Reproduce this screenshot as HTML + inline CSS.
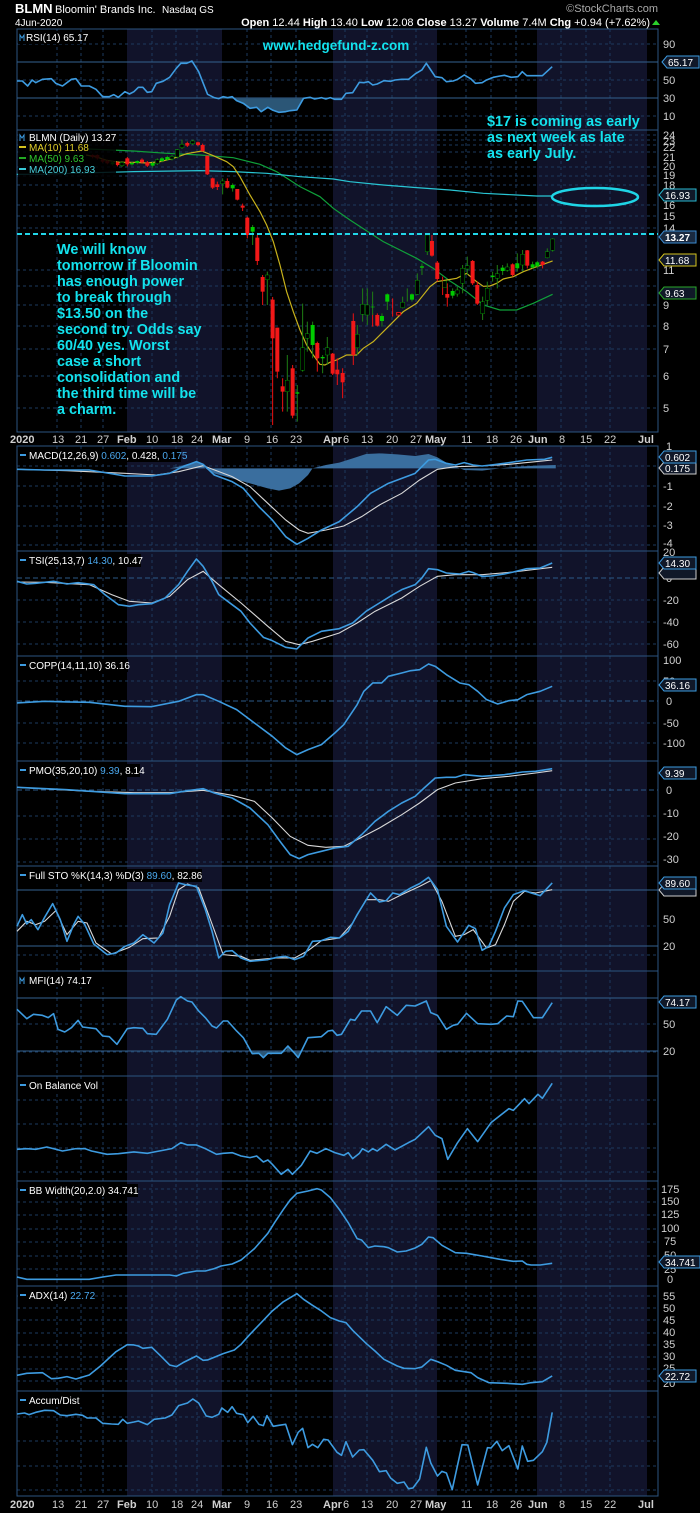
<!DOCTYPE html>
<html><head><meta charset="utf-8"><style>
html,body{margin:0;padding:0;background:#000;}
svg{display:block;font-family:"Liberation Sans",sans-serif;}
.l{fill:none;stroke:#3d9be0;stroke-width:1.6;vector-effect:non-scaling-stroke;stroke-linejoin:round}
.w{fill:none;stroke:#d8d8d8;stroke-width:1.1;vector-effect:non-scaling-stroke}
.ax{fill:#d0d0d0;font-size:11px}
.lb{fill:#fff;font-size:10px}
.gr{stroke:#1d3a5e;stroke-width:1;stroke-dasharray:3,3}
.bd{stroke:#2c5580;stroke-width:1}
.wk{stroke:#1f7e14;stroke-width:1;vector-effect:non-scaling-stroke}
.ho{fill:#000;stroke:#0c0;stroke-width:1;vector-effect:non-scaling-stroke}
</style></head><body>
<svg width="700" height="1513" viewBox="0 0 700 1513" xmlns="http://www.w3.org/2000/svg">
<rect width="700" height="1513" fill="#000"/>
<g fill="#11132a">
<rect x="127" y="29" width="95" height="403"/><rect x="333" y="29" width="104" height="403"/><rect x="537" y="29" width="110" height="403"/>
<rect x="127" y="446" width="95" height="1050"/><rect x="333" y="446" width="104" height="1050"/><rect x="537" y="446" width="110" height="1050"/>
</g>
<g class="gr">
<path d="M57 29V432M81 29V432M103 29V432M152 29V432M176 29V432M197 29V432M247 29V432M271 29V432M296 29V432M345 29V432M367 29V432M392 29V432M416 29V432M466 29V432M491 29V432M516 29V432M561 29V432M586 29V432M610 29V432"/>
<path d="M57 446V1496M81 446V1496M103 446V1496M152 446V1496M176 446V1496M197 446V1496M247 446V1496M271 446V1496M296 446V1496M345 446V1496M367 446V1496M392 446V1496M416 446V1496M466 446V1496M491 446V1496M516 446V1496M561 446V1496M586 446V1496M610 446V1496"/>
<path d="M17 44H658M17 80H658M17 116H658"/>
<path d="M17 135H658M17 140H658M17 145H658M17 152H658M17 167H658M17 176H658M17 185H658M17 205H658M17 216H658M17 228H658M17 270H658M17 286H658M17 305H658M17 326H658M17 349H658M17 376H658M17 408H658"/>
<path d="M17 466H658M17 486H658M17 506H658M17 526H658M17 545H658"/>
<path d="M17 600H658M17 622H658M17 644H658"/>
<path d="M17 681H658M17 723H658M17 743H658"/>
<path d="M17 816H658M17 839H658M17 862H658"/>
<path d="M17 926H658M17 955H658"/>
<path d="M17 1024H658M17 1052H658"/>
<path d="M17 1100H658M17 1124H658M17 1148H658M17 1172H658"/>
<path d="M17 1189H658M17 1202H658M17 1215H658M17 1229H658M17 1242H658M17 1256H658M17 1269H658"/>
<path d="M17 1296H658M17 1308H658M17 1320H658M17 1333H658M17 1345H658M17 1357H658M17 1369H658M17 1381H658"/>
<path d="M17 1417H658M17 1441H658M17 1466H658M17 1490H658"/>
</g>
<g class="bd" fill="none">
<rect x="17" y="29" width="641" height="403"/>
<rect x="17" y="446" width="641" height="1050"/>
<path d="M17 130H658M17 551H658M17 656H658M17 761H658M17 866H658M17 971H658M17 1076H658M17 1181H658M17 1286H658M17 1391H658"/>
<path d="M17 62H658M17 98H658" stroke="#33628f"/>
<path d="M17 890H658M17 946H658M17 998H658M17 1051H658" stroke="#33628f"/>
<path d="M17 578H658M17 701H658M17 790H658" stroke="#2c5a88" stroke-dasharray="5,3"/>
</g>

<text x="15" y="13" font-size="13" font-weight="bold" fill="#fff">BLMN</text>
<text x="55" y="13" font-size="11" fill="#fff">Bloomin' Brands Inc.</text>
<text x="162" y="13" font-size="10" fill="#fff">Nasdaq GS</text>
<text x="15" y="26" font-size="10" fill="#fff">4Jun-2020</text>
<text x="650" y="26" font-size="11" fill="#fff" text-anchor="end"><tspan font-weight="bold">Open</tspan> 12.44 <tspan font-weight="bold">High</tspan> 13.40 <tspan font-weight="bold">Low</tspan> 12.08 <tspan font-weight="bold">Close</tspan> 13.27 <tspan font-weight="bold">Volume</tspan> 7.4M <tspan font-weight="bold">Chg</tspan> +0.94 (+7.62%)</text>
<path d="M652 25l4-5 4 5z" fill="#2bd12b"/>
<text x="658" y="12" font-size="11" fill="#aaa" text-anchor="end">©StockCharts.com</text>

<g transform="scale(0.4464,0.3333)">
<polygon fill="#2b5676" points="495,296 500,290 510,293 520,290 530,302 545,310 560,325 575,322 585,335 600,322 610,330 625,337 640,335 650,332 665,330 680,296"/>
<polyline class="l" points="38,243 50,243 62,258 72,240 80,248 95,238 115,236 125,250 140,258 160,238 170,236 182,258 200,258 215,268 230,290 245,290 255,284 265,292 280,275 290,282 300,275 310,262 320,262 330,277 340,275 350,250 365,244 380,232 395,205 405,190 418,190 430,183 445,215 465,283 480,293 490,296 500,290 510,293 520,290 530,302 545,310 560,325 575,322 585,335 600,322 610,330 625,337 640,335 650,332 665,330 680,295 695,292 705,297 720,293 730,297 740,293 750,298 765,298 775,280 790,278 805,247 815,248 825,245 835,255 845,252 860,242 875,244 885,240 900,238 915,238 930,222 945,210 955,190 965,210 975,230 990,233 1000,245 1015,243 1025,238 1040,225 1055,237 1065,250 1080,248 1090,240 1105,232 1120,228 1130,226 1145,232 1160,230 1170,215 1180,227 1200,227 1215,227 1237,200"/>
</g>
<rect x="18" y="31" width="62" height="13" fill="#000"/>
<path d="M20 41v-6l2 3 2-3v6" stroke="#3d9be0" fill="none"/>
<text x="26" y="41" class="lb">RSI(14) 65.17</text>
<text x="336" y="50" font-size="13.5" font-weight="bold" fill="#13e3ee" text-anchor="middle">www.hedgefund-z.com</text>
<g class="ax"><text x="663" y="48">90</text><text x="663" y="84">50</text><text x="663" y="102">30</text><text x="663" y="120">10</text></g>
<path d="M662 62l5-6h32v12h-32z" fill="#101828" stroke="#3d9be0"/><text x="668" y="66" class="lb" font-size="11">65.17</text>

<g transform="translate(0,125) scale(0.3333)">
<polyline class="w" style="stroke:#0fa03a;stroke-width:1.2" points="265,72 400,78 500,85 600,90 700,98 780,118 830,140 900,185 960,215 1000,250 1050,285 1150,350 1250,400 1300,430 1350,468 1400,500 1450,540 1500,555 1550,555 1600,535 1658,508"/>
<polyline class="w" style="stroke:#29c6d4;stroke-width:1.2" points="50,148 120,148 285,143 400,140 600,137 700,140 800,145 900,155 1000,162 1050,170 1150,180 1250,188 1350,195 1450,205 1550,210 1610,213 1658,213"/>
<polyline class="w" style="stroke:#c8b21c;stroke-width:1.2" points="258,90 290,96 320,106 360,112 400,112 440,114 480,110 520,100 560,86 605,78 640,92 680,110 700,125 720,155 750,210 780,260 800,300 820,350 840,420 860,500 880,560 900,615 920,660 940,690 960,718 975,720 990,712 1010,705 1040,690 1050,690 1070,690 1090,670 1120,650 1150,620 1180,590 1210,560 1250,535 1290,485 1310,470 1340,465 1370,460 1400,445 1430,470 1450,484 1470,483 1490,475 1510,462 1540,455 1570,440 1610,425 1658,408"/>
<path class="wk" style="stroke:#e11" d="M278 88V100M292 88V104M308 100V114M322 104V118M352 110V124M382 96V124M426 100V116M442 108V126M562 50V66M594 50V64M608 56V80M622 92V150M638 158V192M652 170V195M682 160V190M712 192V226M728 236V258M742 275V340M772 330V420M788 450V540M818 516V900M832 608V760M848 760V860M878 720V880M952 650V740M998 684V750M1012 700V780M1028 730V820"/>
<path class="wk" d="M338 108V122M366 108V126M396 110V122M412 106V118M458 110V128M472 100V120M486 96V112M502 92V108M516 90V106M532 72V100M546 44V72M578 44V60M668 160V208M698 175V200M758 300V360M802 440V540M862 690V860M892 780V890M908 536V740M922 590V680M938 590V700M968 690V745M982 636V720"/>
<g fill="#f21818">
<rect x="272" y="90" width="12" height="6"/><rect x="286" y="90" width="12" height="10"/><rect x="302" y="104" width="12" height="6"/><rect x="316" y="108" width="12" height="7"/><rect x="346" y="112" width="12" height="8"/><rect x="376" y="100" width="12" height="18"/><rect x="420" y="104" width="12" height="8"/><rect x="436" y="112" width="12" height="10"/><rect x="556" y="54" width="12" height="8"/><rect x="588" y="52" width="12" height="8"/><rect x="602" y="60" width="12" height="18"/><rect x="616" y="92" width="12" height="56"/><rect x="632" y="160" width="12" height="28"/><rect x="646" y="178" width="12" height="8"/><rect x="676" y="168" width="12" height="20"/><rect x="706" y="192" width="12" height="32"/><rect x="722" y="242" width="12" height="6"/><rect x="736" y="278" width="12" height="52"/><rect x="766" y="338" width="12" height="70"/><rect x="782" y="456" width="12" height="44"/><rect x="812" y="524" width="12" height="116"/><rect x="826" y="608" width="12" height="132"/><rect x="842" y="784" width="12" height="16"/><rect x="872" y="730" width="12" height="142"/><rect x="946" y="654" width="12" height="46"/><rect x="992" y="686" width="12" height="60"/><rect x="1006" y="734" width="12" height="14"/><rect x="1022" y="744" width="12" height="28"/>
</g>
<g fill="#0c0">
<rect x="332" y="112" width="12" height="6"/><rect x="390" y="114" width="12" height="4"/><rect x="406" y="108" width="12" height="6"/><rect x="452" y="114" width="12" height="8"/><rect x="480" y="100" width="12" height="8"/><rect x="496" y="96" width="12" height="8"/><rect x="692" y="180" width="12" height="10"/><rect x="752" y="306" width="12" height="14"/><rect x="886" y="802" width="12" height="4"/><rect x="932" y="600" width="12" height="60"/><rect x="962" y="696" width="12" height="4"/>
</g>
<g class="ho">
<rect x="360" y="112" width="12" height="10"/><rect x="466" y="104" width="12" height="12"/><rect x="510" y="94" width="12" height="8"/><rect x="526" y="74" width="12" height="22"/><rect x="540" y="58" width="12" height="10"/><rect x="572" y="48" width="12" height="8"/><rect x="662" y="168" width="12" height="8"/><rect x="796" y="450" width="12" height="14"/><rect x="856" y="766" width="12" height="34"/><rect x="902" y="668" width="12" height="68"/><rect x="916" y="626" width="12" height="14"/><rect x="976" y="668" width="12" height="22"/>
</g>
<g transform="translate(-300,0)">
<path class="wk" style="stroke:#e11" d="M1360 565V720M1418 565V605M1432 565V605M1478 520V575M1596 330V395M1612 408V470M1628 455V510M1642 475V545M1718 405V480M1732 470V540M1838 415V455M1882 375V430M1928 408V430"/>
<path class="wk" d="M1372 600V690M1388 490V590M1402 490V600M1418 500V570M1446 565V605M1462 505V555M1508 515V550M1522 490V530M1536 505V530M1552 445V510M1566 415V450M1582 330V390M1658 490V520M1672 485V515M1688 420V505M1702 395V450M1748 515V585M1762 470V540M1778 440V470M1792 420V490M1808 420V450M1822 415V440M1852 385V440M1868 375V440M1898 410V430M1912 408V430M1942 370V400M1958 340V380"/>
<g fill="#f21818">
<rect x="1354" y="588" width="12" height="102"/><rect x="1426" y="570" width="12" height="32"/><rect x="1590" y="348" width="12" height="44"/><rect x="1606" y="413" width="12" height="49"/><rect x="1636" y="507" width="12" height="11"/><rect x="1712" y="408" width="12" height="67"/><rect x="1726" y="480" width="12" height="56"/><rect x="1832" y="418" width="12" height="32"/><rect x="1876" y="376" width="12" height="46"/><rect x="1922" y="410" width="12" height="10"/>
</g>
<g fill="#0c0">
<rect x="1412" y="545" width="12" height="2"/><rect x="1440" y="573" width="12" height="15"/><rect x="1456" y="508" width="12" height="22"/><rect x="1530" y="508" width="12" height="16"/><rect x="1560" y="424" width="12" height="4"/><rect x="1652" y="498" width="12" height="14"/><rect x="1772" y="452" width="12" height="4"/><rect x="1802" y="428" width="12" height="10"/><rect x="1846" y="415" width="12" height="15"/><rect x="1892" y="418" width="12" height="10"/><rect x="1906" y="412" width="12" height="12"/>
</g>
<g class="ho">
<rect x="1366" y="628" width="12" height="40"/><rect x="1382" y="538" width="12" height="30"/><rect x="1396" y="540" width="12" height="30"/><rect x="1502" y="532" width="12" height="16"/><rect x="1546" y="466" width="12" height="42"/><rect x="1576" y="330" width="12" height="50"/><rect x="1628" y="468" width="12" height="20"/><rect x="1666" y="495" width="12" height="12"/><rect x="1682" y="430" width="12" height="45"/><rect x="1696" y="422" width="12" height="10"/><rect x="1742" y="530" width="12" height="36"/><rect x="1756" y="490" width="12" height="36"/><rect x="1786" y="446" width="12" height="14"/><rect x="1816" y="426" width="12" height="10"/><rect x="1862" y="388" width="12" height="32"/><rect x="1936" y="380" width="12" height="18"/><rect x="1952" y="342" width="12" height="34"/>
</g>
<rect x="1490" y="563" width="12" height="7" fill="#000" stroke="#e11" vector-effect="non-scaling-stroke"/>
</g>
</g>
<ellipse cx="595" cy="197" rx="43" ry="9" fill="none" stroke="#1fd5e6" stroke-width="2.5"/>
<path d="M17 234H658" stroke="#22d6e8" stroke-width="2" stroke-dasharray="5,3"/>
<rect x="18" y="132" width="98" height="45" fill="#000" opacity="0.85"/>
<path d="M20 141v-6l2 3 2-3v6" stroke="#3d9be0" fill="none"/>
<text x="29" y="141" class="lb">BLMN (Daily) 13.27</text>
<path d="M19 147h7" stroke="#d4c21e" stroke-width="2"/><text x="29" y="151" class="lb" style="fill:#e3d02a">MA(10) 11.68</text>
<path d="M19 158h7" stroke="#22a922" stroke-width="2"/><text x="29" y="162" class="lb" style="fill:#2ec72e">MA(50) 9.63</text>
<path d="M19 169h7" stroke="#38c9d6" stroke-width="2"/><text x="29" y="173" class="lb" style="fill:#48d0dc">MA(200) 16.93</text>
<g font-size="14.4" font-weight="bold" fill="#13e3ee">
<text x="487" y="126">$17 is coming as early</text>
<text x="487" y="142">as next week as late</text>
<text x="487" y="158">as early July.</text>
<text x="57" y="254">We will know</text>
<text x="57" y="270">tomorrow if Bloomin</text>
<text x="57" y="286">has enough power</text>
<text x="57" y="302">to break through</text>
<text x="57" y="318">$13.50 on the</text>
<text x="57" y="334">second try. Odds say</text>
<text x="57" y="350">60/40 yes. Worst</text>
<text x="57" y="366">case a short</text>
<text x="57" y="382">consolidation and</text>
<text x="57" y="398">the third time will be</text>
<text x="57" y="414">a charm.</text>
</g>
<g class="ax" font-size="10.5"><text x="663" y="139">24</text><text x="663" y="145">23</text><text x="663" y="151">22</text><text x="663" y="161">21</text><text x="663" y="170">20</text><text x="663" y="179">19</text><text x="663" y="189">18</text><text x="663" y="209">16</text><text x="663" y="220">15</text><text x="663" y="232">14</text><text x="663" y="274">11</text><text x="663" y="309">9</text><text x="663" y="330">8</text><text x="663" y="353">7</text><text x="663" y="380">6</text><text x="663" y="412">5</text></g>
<path d="M659 195l5-6h32v12h-32z" fill="#101828" stroke="#29b8d0"/><text x="665" y="199" class="lb" font-size="11">16.93</text>
<path d="M659 237l5-6h32v12h-32z" fill="#1a2a40" stroke="#3a8ad0"/><text x="665" y="241" class="lb" font-size="11" font-weight="bold">13.27</text>
<path d="M659 260l5-6h32v12h-32z" fill="#101828" stroke="#d4c21e"/><text x="665" y="264" class="lb" font-size="11">11.68</text>
<path d="M659 293l5-6h32v12h-32z" fill="#101828" stroke="#2aa82a"/><text x="665" y="297" class="lb" font-size="11">9.63</text>

<g id="dates" class="ax" font-size="11.5">
<text x="10" y="443" font-weight="bold">2020</text><text x="52" y="443">13</text><text x="75" y="443">21</text><text x="97" y="443">27</text><text x="117" y="443" font-weight="bold">Feb</text><text x="146" y="443">10</text><text x="171" y="443">18</text><text x="191" y="443">24</text><text x="212" y="443" font-weight="bold">Mar</text><text x="244" y="443">9</text><text x="266" y="443">16</text><text x="290" y="443">23</text><text x="323" y="443" font-weight="bold">Apr</text><text x="343" y="443">6</text><text x="361" y="443">13</text><text x="386" y="443">20</text><text x="410" y="443">27</text><text x="425" y="443" font-weight="bold">May</text><text x="461" y="443">11</text><text x="486" y="443">18</text><text x="510" y="443">26</text><text x="528" y="443" font-weight="bold">Jun</text><text x="559" y="443">8</text><text x="580" y="443">15</text><text x="604" y="443">22</text><text x="638" y="443" font-weight="bold">Jul</text>
</g>

<g transform="translate(0,420) scale(0.4464,0.3333)">
<polygon fill="#3a6e9e" points="380,145 400,140 420,132 440,127 455,135 460,145 480,160 520,175 560,190 600,205 625,212 650,205 670,190 690,165 700,145 730,135 760,128 790,115 820,102 850,100 890,103 930,108 960,102 980,112 1000,128 1020,140 1040,150 1080,152 1120,145 1160,140 1200,137 1245,135 1245,145"/>
<polyline class="w" points="38,148 150,152 280,160 350,165 400,155 455,137 520,170 560,200 600,250 640,300 670,330 690,340 730,330 770,318 810,290 850,255 900,220 940,180 980,148 1020,140 1080,138 1140,133 1200,125 1237,120"/>
<polyline class="l" points="38,148 100,150 200,150 280,168 340,168 380,160 410,140 440,125 455,133 480,165 520,185 545,205 580,260 610,300 640,350 665,373 690,355 720,330 760,305 800,260 830,220 870,190 900,175 930,160 960,120 975,118 1000,130 1020,135 1040,128 1060,135 1080,138 1100,135 1130,130 1180,120 1220,118 1237,112"/>
</g>
<rect x="18" y="449" width="163" height="13" fill="#000"/><path d="M20 455h6" stroke="#3d9be0" stroke-width="2"/>
<text x="29" y="459" class="lb">MACD(12,26,9) <tspan fill="#4aa8ee">0.602</tspan>, 0.428, <tspan fill="#4aa8ee">0.175</tspan></text>
<g class="ax" font-size="10.5"><text x="666" y="450">1</text><text x="663" y="490">-1</text><text x="663" y="510">-2</text><text x="663" y="529">-3</text><text x="663" y="547">-4</text></g>
<path d="M659 468l5-6h32v12h-32z" fill="#101828" stroke="#ccc"/><text x="665" y="472" class="lb" font-size="11">0.175</text><path d="M659 457l5-6h32v12h-32z" fill="#101828" stroke="#3d9be0"/><text x="665" y="461" class="lb" font-size="11">0.602</text>

<g transform="translate(0,548) scale(0.4464,0.3333)">
<polyline class="w" points="38,102 100,103 200,110 250,140 290,160 340,165 380,145 420,95 455,70 490,110 540,165 600,235 640,280 670,290 700,280 760,255 800,225 840,190 900,150 940,115 980,85 1020,80 1080,80 1150,72 1237,58"/>
<polyline class="l" points="38,100 60,108 80,106 120,100 150,108 175,104 210,110 235,140 265,170 290,175 310,170 340,167 370,150 400,110 420,70 440,33 455,55 475,100 490,140 510,160 540,190 560,225 590,268 610,278 640,298 665,303 690,270 720,250 760,242 790,225 820,190 850,165 880,140 900,125 930,110 945,90 960,62 980,65 1000,75 1030,78 1050,70 1060,74 1080,85 1100,84 1130,78 1150,72 1180,62 1210,60 1237,45"/>
<polyline class="l" points="38,465 100,460 150,462 200,463 280,475 340,476 400,460 440,440 455,440 490,460 530,485 570,525 610,565 640,600 665,620 690,605 720,590 750,555 770,530 800,470 815,430 835,405 855,405 870,385 900,375 920,368 940,365 960,348 975,355 1000,380 1030,405 1050,410 1070,430 1090,455 1115,468 1140,458 1160,455 1180,440 1210,430 1237,415"/>
</g>
<rect x="18" y="554" width="123" height="13" fill="#000"/><path d="M20 560h6" stroke="#3d9be0" stroke-width="2"/>
<text x="29" y="564" class="lb">TSI(25,13,7) <tspan fill="#4aa8ee">14.30</tspan>, 10.47</text>
<rect x="18" y="659" width="110" height="13" fill="#000"/><path d="M20 665h6" stroke="#3d9be0" stroke-width="2"/>
<text x="29" y="669" class="lb">COPP(14,11,10) 36.16</text>
<g class="ax" font-size="10.5"><text x="663" y="556">20</text><text x="666" y="582">0</text><text x="663" y="604">-20</text><text x="663" y="626">-40</text><text x="663" y="648">-60</text><text x="663" y="664">100</text><text x="663" y="685">50</text><text x="666" y="705">0</text><text x="663" y="727">-50</text><text x="663" y="747">-100</text></g>
<path d="M659 573l5-6h32v12h-32z" fill="#101828" stroke="#ccc"/><path d="M659 563l5-6h32v12h-32z" fill="#101828" stroke="#3d9be0"/><text x="665" y="567" class="lb" font-size="11">14.30</text>
<path d="M659 685l5-6h32v12h-32z" fill="#101828" stroke="#3d9be0"/><text x="665" y="689" class="lb" font-size="11">36.16</text>

<g transform="translate(0,758) scale(0.4464,0.3333)">
<polyline class="w" points="38,88 200,100 300,104 380,104 455,97 520,112 570,130 610,180 650,235 690,262 730,268 770,265 800,245 850,210 900,170 940,135 980,95 1020,75 1080,62 1140,55 1200,45 1237,38"/>
<polyline class="l" points="38,88 150,95 280,107 380,107 420,98 455,92 480,105 520,120 560,150 600,200 630,255 650,290 670,302 690,290 720,280 750,270 780,265 810,230 840,190 870,160 900,135 930,115 950,90 975,60 1000,58 1020,58 1040,50 1080,55 1130,50 1170,42 1200,40 1237,32"/>
<polyline class="w" points="38,520 60,490 80,500 100,490 125,458 150,530 175,490 195,495 215,555 250,588 290,568 320,542 355,540 380,475 400,395 420,378 445,390 470,480 500,590 540,595 560,607 620,600 660,600 690,578 720,548 760,540 790,495 820,425 850,425 870,430 900,410 940,385 965,368 990,430 1020,535 1040,530 1060,515 1090,570 1110,560 1130,500 1150,430 1175,400 1200,405 1237,395"/>
<polyline class="l" points="38,505 50,470 60,498 70,485 85,515 100,478 118,437 135,485 150,550 165,500 175,475 190,500 210,558 240,590 260,585 280,565 300,555 320,530 345,555 365,525 380,440 400,375 415,380 440,385 460,455 475,520 490,600 505,580 520,578 540,600 560,610 600,605 620,598 640,595 660,605 680,595 700,550 720,548 740,538 760,540 780,520 800,470 830,405 850,432 865,428 880,405 895,410 920,390 940,377 960,358 980,395 1000,505 1025,552 1050,502 1065,512 1080,577 1095,565 1110,520 1130,450 1150,410 1175,398 1190,405 1210,413 1237,375"/>
</g>
<rect x="18" y="764" width="122" height="13" fill="#000"/><path d="M20 770h6" stroke="#3d9be0" stroke-width="2"/>
<text x="29" y="774" class="lb">PMO(35,20,10) <tspan fill="#4aa8ee">9.39</tspan>, 8.14</text>
<rect x="18" y="869" width="184" height="13" fill="#000"/><path d="M20 875h6" stroke="#3d9be0" stroke-width="2"/>
<text x="29" y="879" class="lb">Full STO %K(14,3) %D(3) <tspan fill="#4aa8ee">89.60</tspan>, 82.86</text>
<g class="ax" font-size="10.5"><text x="666" y="794">0</text><text x="663" y="817">-10</text><text x="663" y="840">-20</text><text x="663" y="863">-30</text><text x="663" y="923">50</text><text x="663" y="950">20</text></g>
<path d="M659 773l5-6h32v12h-32z" fill="#101828" stroke="#3d9be0"/><text x="665" y="777" class="lb" font-size="11">9.39</text>
<path d="M659 890l5-6h32v12h-32z" fill="#101828" stroke="#ccc"/><path d="M659 883l5-6h32v12h-32z" fill="#101828" stroke="#3d9be0"/><text x="665" y="887" class="lb" font-size="11">89.60</text>

<g transform="translate(0,966) scale(0.4464,0.3333)">
<polygon fill="#2b5676" points="560,257 565,263 580,262 590,275 600,262 630,262 640,257 645,240 652,257 660,262 668,275 676,257"/>
<polyline class="l" points="38,130 60,158 75,145 95,148 108,155 120,143 130,190 145,198 160,185 175,163 185,183 215,188 230,210 245,212 262,235 285,188 300,185 320,187 330,203 350,205 375,160 395,102 405,92 420,105 430,108 445,135 460,155 475,180 485,186 500,165 510,165 530,195 545,215 565,263 580,262 590,275 600,262 630,262 645,240 660,262 668,275 690,215 720,212 735,195 745,193 755,208 765,205 785,160 795,163 810,135 830,135 845,170 865,122 890,148 910,118 930,120 955,105 965,140 980,148 1000,190 1015,178 1025,175 1045,142 1070,173 1100,175 1115,173 1135,150 1150,152 1160,105 1170,106 1195,155 1215,155 1237,110"/>
<polyline class="l" points="38,550 60,548 80,550 105,543 140,555 170,548 190,548 205,555 240,565 265,563 285,560 300,558 330,562 345,558 385,548 405,530 420,537 440,537 460,548 485,565 500,562 520,560 540,570 560,575 575,570 590,588 600,582 610,595 630,625 645,610 655,625 675,598 695,555 710,562 730,548 750,560 770,568 780,560 790,578 805,562 812,548 825,558 835,548 845,555 865,535 885,552 915,530 930,520 960,482 975,508 990,518 1003,580 1025,530 1047,488 1070,527 1100,470 1140,428 1150,433 1175,398 1185,413 1205,385 1215,397 1237,352"/>
</g>
<rect x="18" y="974" width="88" height="13" fill="#000"/><path d="M20 984v-6l2 3 2-3v6" stroke="#3d9be0" fill="none"/>
<text x="29" y="984" class="lb">MFI(14) 74.17</text>
<rect x="18" y="1079" width="82" height="13" fill="#000"/><path d="M20 1085h6" stroke="#3d9be0" stroke-width="2"/>
<text x="29" y="1089" class="lb">On Balance Vol</text>
<g class="ax" font-size="10.5"><text x="663" y="1028">50</text><text x="663" y="1055">20</text></g>
<path d="M659 1002l5-6h32v12h-32z" fill="#101828" stroke="#3d9be0"/><text x="665" y="1006" class="lb" font-size="11">74.17</text>

<g transform="translate(0,1176) scale(0.4464,0.3333)">
<polyline class="l" points="38,303 60,310 200,310 230,303 260,297 380,297 395,300 410,292 440,285 460,285 480,278 495,270 520,264 540,252 555,235 570,218 585,195 600,172 615,140 635,100 650,72 665,52 690,45 710,38 720,42 740,65 760,100 780,140 800,188 810,192 825,215 840,210 860,212 870,215 890,228 910,225 930,216 945,205 960,183 970,185 990,208 1020,230 1045,232 1080,240 1120,250 1150,256 1170,255 1180,265 1190,267 1210,267 1237,262"/>
<polyline class="l" points="38,598 60,592 95,590 115,608 130,607 150,602 170,609 185,603 200,597 225,570 260,527 285,506 300,507 310,510 320,517 340,514 360,540 380,567 395,572 410,560 440,540 455,553 465,552 500,533 525,522 540,505 560,475 585,440 610,405 635,377 665,353 680,370 700,388 720,405 740,425 760,435 775,440 790,463 820,502 840,525 860,550 890,570 905,577 930,578 945,573 965,550 980,557 1000,568 1020,583 1055,590 1070,605 1095,620 1135,622 1170,625 1190,620 1215,617 1237,600"/>
</g>
<rect x="18" y="1184" width="120" height="13" fill="#000"/><path d="M20 1190h6" stroke="#3d9be0" stroke-width="2"/>
<text x="29" y="1194" class="lb">BB Width(20,2.0) 34.741</text>
<rect x="18" y="1289" width="76" height="13" fill="#000"/><path d="M20 1295h6" stroke="#3d9be0" stroke-width="2"/>
<text x="29" y="1299" class="lb">ADX(14) <tspan fill="#4aa8ee">22.72</tspan></text>
<g class="ax" font-size="10.5"><text x="661" y="1193">175</text><text x="661" y="1205">150</text><text x="661" y="1218">125</text><text x="661" y="1232">100</text><text x="664" y="1245">75</text><text x="664" y="1259">50</text><text x="664" y="1273">25</text><text x="667" y="1283">0</text>
<text x="663" y="1300">55</text><text x="663" y="1312">50</text><text x="663" y="1324">45</text><text x="663" y="1336">40</text><text x="663" y="1348">35</text><text x="663" y="1360">30</text><text x="663" y="1372">25</text><text x="663" y="1387">20</text></g>
<path d="M659 1262l5-6h36v12h-36z" fill="#101828" stroke="#3d9be0"/><text x="665" y="1266" class="lb" font-size="11">34.741</text>
<path d="M659 1376l5-6h32v12h-32z" fill="#101828" stroke="#3d9be0"/><text x="665" y="1380" class="lb" font-size="11">22.72</text>

<g transform="translate(0,1384) scale(0.4464,0.3333)">
<polyline class="l" points="38,90 55,87 65,92 80,85 100,79 120,80 135,93 150,95 170,91 185,94 195,102 215,102 230,118 250,120 265,121 275,106 285,118 300,114 310,111 330,122 345,106 370,102 385,93 400,65 420,57 432,45 445,57 462,96 475,100 490,91 497,72 510,85 520,68 530,88 545,92 555,116 567,97 580,121 590,125 598,95 612,127 625,124 640,121 655,182 668,145 678,133 690,191 700,181 712,191 725,166 735,168 755,205 765,214 775,173 790,219 805,198 815,197 835,229 850,263 865,260 875,282 890,298 905,294 915,314 925,312 940,285 955,190 965,237 980,276 990,262 1000,267 1013,317 1035,182 1048,183 1070,303 1092,191 1100,192 1113,172 1125,200 1140,185 1160,255 1170,186 1182,232 1195,229 1215,203 1225,175 1237,85"/>
</g>
<rect x="18" y="1394" width="64" height="13" fill="#000"/><path d="M20 1400h6" stroke="#3d9be0" stroke-width="2"/>
<text x="29" y="1404" class="lb">Accum/Dist</text>
<rect x="0" y="1497" width="700" height="16" fill="#000"/>
<use href="#dates" transform="translate(0,1065)"/>
</svg>
</body></html>
